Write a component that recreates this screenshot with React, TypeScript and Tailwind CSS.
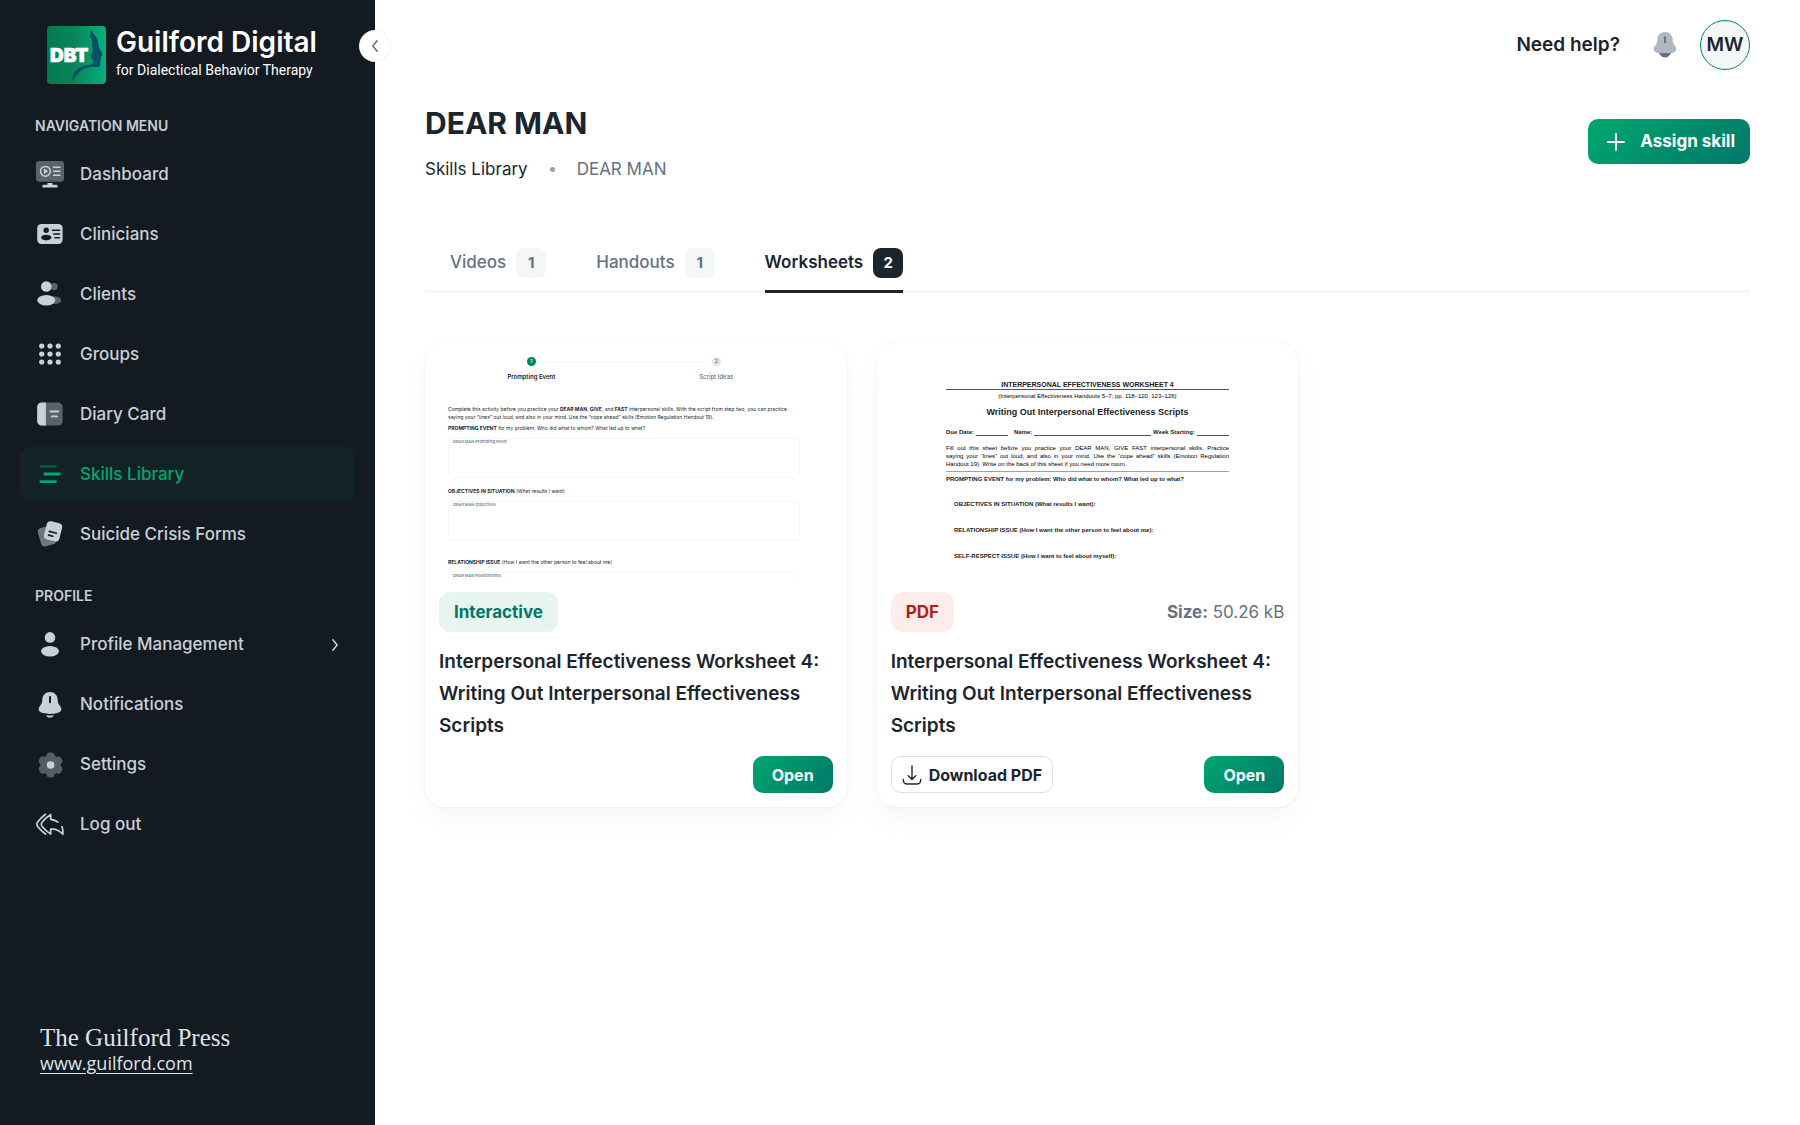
import React from "react";

/* ---------- icons ---------- */

type IconProps = { className?: string };

function Icon({ children, className = "size-7" }: { children: React.ReactNode; className?: string }) {
  return (
    <svg viewBox="0 0 28 28" className={className + " shrink-0"} fill="currentColor" aria-hidden="true">
      {children}
    </svg>
  );
}

const line = { stroke: "currentColor", strokeLinecap: "round" as const, fill: "none" };

const DashboardIcon = () => (
  <Icon>
    <rect width="28" height="20.7" rx="3.2" opacity="0.4" />
    <circle cx="9.4" cy="10.3" r="4.9" fill="none" stroke="currentColor" strokeWidth="1.5" />
    <path d="M8 7.6v5.4l4.2-2.7z" />
    <path d="M17 6.3h7.4M17 10.3h7.4M17 14.2h7.4" stroke="currentColor" strokeWidth="1.5" />
    <path d="M11.5 22h5v1.8h4.2c.5 0 .8.3.8.8v1.9h-15v-1.9c0-.5.3-.8.8-.8h4.2z" />
  </Icon>
);

const CliniciansIcon = () => (
  <Icon>
    <rect x="1.2" y="3" width="25.4" height="20" rx="4.2" />
    <g fill="#141a21">
      <circle cx="10.2" cy="9.2" r="2.7" />
      <ellipse cx="10.2" cy="16.6" rx="5.2" ry="2.8" />
    </g>
    <path d="M16.4 9.2h7.2M17.8 13h5.8M19 16.8h4.6" stroke="#141a21" strokeWidth="1.5" strokeLinecap="round" />
  </Icon>
);

const ClientsIcon = () => (
  <Icon>
    <g opacity="0.4">
      <circle cx="18" cy="5.6" r="3.7" />
      <ellipse cx="18.6" cy="19.3" rx="6.6" ry="3.8" />
    </g>
    <circle cx="10.3" cy="5.5" r="5.3" />
    <ellipse cx="10.3" cy="19.2" rx="9" ry="5.3" />
  </Icon>
);

const GroupsIcon = () => (
  <Icon>
    {[5, 13, 21].map((y) => [5.7, 14, 22.3].map((x) => <circle key={x + "-" + y} cx={x} cy={y} r="2.6" />))}
  </Icon>
);

const DiaryIcon = () => (
  <Icon>
    <rect x="1.2" y="1.4" width="25.4" height="23.2" rx="4.6" opacity="0.4" />
    <path d="M9.9 1.4H5.8a4.6 4.6 0 0 0-4.6 4.6v14a4.6 4.6 0 0 0 4.6 4.6h4.1z" />
    <path d="M14.5 10.5h7.8M15.8 15.4h5.2" {...line} strokeWidth="1.9" />
  </Icon>
);

const SkillsIcon = () => (
  <Icon>
    <path d="M4.8 5.4h14.7" {...line} strokeWidth="2.8" opacity="0.4" />
    <path d="M8.7 13h14.7M4.8 20.7h14.7" {...line} strokeWidth="2.8" />
  </Icon>
);

const FormsIcon = () => (
  <Icon>
    <rect x="3.2" y="5.6" width="15.6" height="19" rx="4" opacity="0.5" transform="rotate(-16 11 15)" />
    <rect x="9.2" y="1" width="15.8" height="18.6" rx="4" transform="rotate(14 17 10.3)" />
    <path d="M13.3 10.4l7 1.9M12.6 14.1l4.2 1.1" stroke="#141a21" strokeWidth="1.7" strokeLinecap="round" />
  </Icon>
);

const ProfileIcon = () => (
  <Icon>
    <circle cx="14" cy="6.4" r="5.3" />
    <ellipse cx="14" cy="20.2" rx="9" ry="5.3" />
  </Icon>
);

const bellBody =
  "M14 1c-4.4 0-7.5 3.3-7.7 7.6-.1 2.2-.2 3.4-1.3 5-1.2 1.7-2.3 2.9-2.3 4.9C2.7 21.6 8 22.9 14 22.9s11.3-1.3 11.3-4.4c0-2-1.1-3.2-2.3-4.9-1.1-1.6-1.2-2.8-1.3-5C21.5 4.3 18.4 1 14 1z";

const BellIcon = () => (
  <Icon>
    <path d={bellBody} />
    <path d="M14 5.9v5.4" stroke="#141a21" strokeWidth="2" strokeLinecap="round" />
    <path d="M9.8 24.2c2.8.4 5.6.4 8.4 0-1 1.5-2.5 2.3-4.2 2.3s-3.2-.8-4.2-2.3z" />
  </Icon>
);

const HeaderBellIcon = ({ className }: IconProps) => (
  <Icon className={className}>
    <path d="M7.8 21c1.2 3.7 3.5 5.6 6.2 5.6s5-1.9 6.2-5.6z" fill="#637381" />
    <path d={bellBody} fill="#afb8c1" />
    <path d="M8.6 22.6h10.8" stroke="#637381" strokeWidth="1" />
    <path d="M14 5.9v5.4" stroke="#637381" strokeWidth="2" strokeLinecap="round" />
  </Icon>
);

const GearIcon = () => (
  <Icon>
    <g fill="#565d66">
      <circle cx="14.6" cy="14" r="10.2" />
      {[0, 60, 120, 180, 240, 300].map((a) => (
        <rect key={a} x="10.6" y="1.4" width="8" height="9" rx="3" transform={`rotate(${a} 14.6 14)`} />
      ))}
    </g>
    <circle cx="14.6" cy="14" r="3.8" />
  </Icon>
);

const LogoutIcon = () => (
  <Icon>
    <path
      d="M9.5 3.3C6.5 5.5 4 7.9 1.7 11.1c-1 1.4-1 3 0 4.4C4 18.6 6.5 21 9.5 23"
      {...line}
      strokeWidth="1.7"
    />
    <path
      d="M22 11.1c-2-1.5-4.3-2.4-7.3-2.8V3.5C11 5.9 8.3 8.3 5.8 11.5c-.8 1.1-.8 2.5 0 3.6 2.5 3.2 5.2 5.6 8.9 8v-5c5.1-.5 9 1.4 12.2 5.2.1-3 .1-5.2-.9-7.7"
      {...line}
      strokeWidth="1.7"
      strokeLinejoin="round"
    />
  </Icon>
);

/* ---------- sidebar ---------- */

const mainNav = [
  { label: "Dashboard", icon: DashboardIcon },
  { label: "Clinicians", icon: CliniciansIcon },
  { label: "Clients", icon: ClientsIcon },
  { label: "Groups", icon: GroupsIcon },
  { label: "Diary Card", icon: DiaryIcon },
  { label: "Skills Library", icon: SkillsIcon, active: true },
  { label: "Suicide Crisis Forms", icon: FormsIcon },
];

const profileNav = [
  { label: "Profile Management", icon: ProfileIcon, expandable: true },
  { label: "Notifications", icon: BellIcon },
  { label: "Settings", icon: GearIcon },
  { label: "Log out", icon: LogoutIcon },
];

type NavEntry = { label: string; icon: () => React.ReactElement; active?: boolean; expandable?: boolean };

function NavSection({ title, items }: { title: string; items: NavEntry[] }) {
  return (
    <section>
      <h2 className="px-[15px] text-sm leading-5 font-semibold text-[#c4cdd5]">{title}</h2>
      <ul className="mt-[11px] flex flex-col gap-1">
        {items.map(({ label, icon: ItemIcon, active, expandable }) => (
          <li key={label}>
            <a
              href="#"
              aria-current={active ? "page" : undefined}
              className={
                active
                  ? "flex h-14 items-center gap-4 rounded-xl bg-[#00a76f]/6 px-4 text-[17px] font-medium text-[#00a76f]"
                  : "flex h-14 items-center gap-4 rounded-xl px-4 text-[17px] font-medium text-[#c9d0d8]"
              }
            >
              <ItemIcon />
              <span className="flex-1">{label}</span>
              {expandable && (
                <svg viewBox="0 0 8 14" className="h-3 w-2" fill="none" stroke="currentColor" strokeWidth="1.8" strokeLinecap="round" strokeLinejoin="round" aria-hidden="true">
                  <path d="M1.5 1l5 6-5 6" />
                </svg>
              )}
            </a>
          </li>
        ))}
      </ul>
    </section>
  );
}

function Logo() {
  return (
    <div className="flex items-start gap-2.5 px-[27px]">
      <svg viewBox="0 0 59 58" className="h-[58px] w-[59px] shrink-0" role="img" aria-label="DBT">
        <defs>
          <linearGradient id="logo-bg" x1="0" y1="0" x2="1" y2="0">
            <stop offset="0" stopColor="#057a52" />
            <stop offset="0.45" stopColor="#07845a" />
            <stop offset="1" stopColor="#05b07b" />
          </linearGradient>
        </defs>
        <rect width="59" height="58" rx="4" fill="url(#logo-bg)" />
        <path
          d="M44.3 3.5C45.5 8 49.5 10 50.8 14.5c.8 2.5.3 4.2 1 6.5.9 3 3 5.2 3.6 7.7-.1 1-1.6.8-1.7 1.8l.5 2.4-1 1.2.4 1.5c-1.2 1.5.4 3-.6 4.2-2.5 2.2-7.5.6-12.2 1.8-7 1.8-11.5 7.2-15.4 14.4 0-4.5.6-8 3.4-11.5 4.5-5 10.2-5 14.2-5.8 3-.9 4-3.2 2.6-5.2-1.6-1.5-2.2-2.6-1.8-4 .9-2.4 2-3.5 1.9-6.2-.1-2.2-1-3.5-.4-6 .4-2.5-1.8-4.5-2.1-7-.3-2.5.3-4.5 1.1-6.8z"
          fill="#0a4f63"
        />
        <text x="3" y="36" fontFamily="Inter, sans-serif" fontWeight="900" fontSize="19" fill="#fff" stroke="#fff" strokeWidth="0.7">
          DBT
        </text>
      </svg>
      <div className="whitespace-nowrap text-white">
        <p className="text-[28px] leading-8 font-semibold">Guilford Digital</p>
        <p className="mt-0.5 font-['Roboto',sans-serif] text-sm leading-5">for Dialectical Behavior Therapy</p>
      </div>
    </div>
  );
}

function Sidebar() {
  return (
    <aside className="relative flex w-[375px] shrink-0 flex-col bg-[#141a21] px-5 pt-[26px] pb-[49px]">
      <Logo />
      <button
        type="button"
        aria-label="Collapse menu"
        className="absolute top-[30px] -right-4 flex size-8 items-center justify-center rounded-full border border-[#919eab]/12 bg-white text-[#637381]"
      >
        <svg viewBox="0 0 8 14" className="h-3 w-2" fill="none" stroke="currentColor" strokeWidth="1.8" strokeLinecap="round" strokeLinejoin="round" aria-hidden="true">
          <path d="M6.5 1l-5 6 5 6" />
        </svg>
      </button>
      <nav aria-label="Main" className="mt-8 flex flex-col gap-[23px]">
        <NavSection title="NAVIGATION MENU" items={mainNav} />
        <NavSection title="PROFILE" items={profileNav} />
      </nav>
      <footer className="mt-auto px-5 pt-8 text-[#dfe3e8]">
        <p className="font-['Liberation_Serif',serif] text-[25px] leading-[26px]">The Guilford Press</p>
        <a href="#" className="font-['Open_Sans',sans-serif] text-lg leading-6 underline underline-offset-3">
          www.guilford.com
        </a>
      </footer>
    </aside>
  );
}

/* ---------- worksheet previews ---------- */

function PreviewField({ label }: { label: string }) {
  return (
    <div className="mt-1.5 h-10 rounded-[3px] border border-[#f4f6f8] px-1 text-[4px] leading-[6px] font-medium text-[#637381]">
      {label}
    </div>
  );
}

function InteractivePreview() {
  return (
    <div className="h-[234px] overflow-hidden pt-3.5 text-[5px] leading-2 text-[#1c252e]">
      <div className="relative mr-[38px] ml-3.5 grid grid-cols-2 text-center text-[6px] font-medium">
        <div className="absolute top-1 right-1/4 left-1/4 mx-2 h-px bg-[#f4f6f8]" />
        <div>
          <span className="mx-auto block size-[9px] rounded-full bg-[#00875a] text-[5px] leading-[9px] text-white">1</span>
          <p className="mt-[7px] font-semibold">Prompting Event</p>
        </div>
        <div className="text-[#637381]">
          <span className="mx-auto block size-[9px] rounded-full bg-[#dfe3e8] text-[5px] leading-[9px]">2</span>
          <p className="mt-[7px]">Script Ideas</p>
        </div>
      </div>
      <div className="mt-6 mr-[47px] ml-[23px]">
        <p>
          Complete this activity before you practice your <b>DEAR MAN</b>, <b>GIVE</b>, and <b>FAST</b> interpersonal
          skills. With the script from step two, you can practice
          <br />
          saying your “lines” out loud, and also in your mind. Use the “cope ahead” skills (Emotion Regulation Handout 19).
        </p>
        <p className="mt-[3px]">
          <b>PROMPTING EVENT</b> for my problem: Who did what to whom? What led up to what?
        </p>
        <PreviewField label="DEAR MAN Prompting Event" />
        <p className="mt-[9px]">
          <b>OBJECTIVES IN SITUATION</b> (What results I want)
        </p>
        <PreviewField label="DEAR MAN Objectives" />
        <p className="mt-[17px]">
          <b>RELATIONSHIP ISSUE</b> (How I want the other person to feel about me)
        </p>
        <PreviewField label="DEAR MAN Relationships" />
      </div>
    </div>
  );
}

function PdfPreview() {
  return (
    <div className="h-[234px] overflow-hidden pt-[38px] font-['Liberation_Sans',sans-serif] text-[6px] leading-2 font-bold text-[#1c1c22]">
      <div className="mx-auto w-[283px]">
        <p className="border-b border-[#55555a] text-center text-[7px]">INTERPERSONAL EFFECTIVENESS WORKSHEET 4</p>
        <p className="mt-px text-center leading-[10px] font-normal text-black">
          (Interpersonal Effectiveness Handouts 5–7; pp. 118–120, 123–126)
        </p>
        <p className="mt-[5px] text-center text-[9px] leading-3">Writing Out Interpersonal Effectiveness Scripts</p>
        <div className="mt-2.5 flex gap-0.5">
          <span>Due Date:</span>
          <span className="mr-1 w-8 border-b border-[#55555a]" />
          <span>Name:</span>
          <span className="flex-1 border-b border-[#55555a]" />
          <span>Week Starting:</span>
          <span className="w-8 border-b border-[#55555a]" />
        </div>
        <p className="mt-2 font-normal whitespace-nowrap text-black">
          <span className="block [text-align-last:justify]">
            Fill out this sheet before you practice your DEAR MAN, GIVE FAST interpersonal skills. Practice
          </span>
          <span className="block [text-align-last:justify]">
            saying your “lines” out loud, and also in your mind. Use the “cope ahead” skills (Emotion Regulation
          </span>
          <span className="block">Handout 19). Write on the back of this sheet if you need more room.</span>
        </p>
        <p className="mt-[3px] border-t border-[#a0a0a4] pt-[3px]">
          PROMPTING EVENT for my problem: Who did what to whom? What led up to what?
        </p>
        <div className="mt-[17px] flex flex-col gap-[18px] pl-2">
          <p>OBJECTIVES IN SITUATION (What results I want):</p>
          <p>RELATIONSHIP ISSUE (How I want the other person to feel about me):</p>
          <p>SELF-RESPECT ISSUE (How I want to feel about myself):</p>
        </div>
      </div>
    </div>
  );
}

/* ---------- cards ---------- */

function WorksheetCard({
  preview,
  badge,
  size,
  downloadable,
}: {
  preview: React.ReactNode;
  badge: React.ReactNode;
  size?: string;
  downloadable?: boolean;
}) {
  return (
    <article className="rounded-[20px] bg-white shadow-[0_0_2px_rgba(145,158,171,0.2),0_12px_24px_-4px_rgba(145,158,171,0.12)]">
      {preview}
      <div className="px-3.5 pt-[15px] pb-3.5">
        <div className="flex h-10 items-center justify-between text-[17px] leading-10">
          {badge}
          {size && (
            <p className="text-[#637381]">
              <b>Size:</b> {size}
            </p>
          )}
        </div>
        <h3 className="mt-3.5 text-[19px] leading-8 font-semibold text-[#1c252e]">
          Interpersonal Effectiveness Worksheet 4: Writing Out Interpersonal Effectiveness Scripts
        </h3>
        <div className="mt-3.5 flex h-[37px] items-stretch">
          {downloadable && (
            <button type="button" className="flex items-center gap-[7px] rounded-[10px] border border-[#dce0e4] px-2.5 text-base font-bold whitespace-nowrap text-[#1c252e]">
              <svg viewBox="0 0 20 20" className="size-5" fill="none" stroke="currentColor" strokeWidth="1.4" strokeLinecap="round" strokeLinejoin="round" aria-hidden="true">
                <path d="M10 1v13.5M6.3 10.8L10 14.6l3.7-3.8" />
                <path d="M1.3 14.4c0 3.3.7 4.6 4.2 4.6h9c3.5 0 4.2-1.3 4.2-4.6" />
              </svg>
              Download PDF
            </button>
          )}
          <button type="button" className="ml-auto w-20 rounded-[10px] bg-linear-135 from-[#00a76f] to-[#007867] text-base font-bold text-white">
            Open
          </button>
        </div>
      </div>
    </article>
  );
}

const tabs = [
  { label: "Videos", count: 1 },
  { label: "Handouts", count: 1 },
  { label: "Worksheets", count: 2, active: true },
];

export default function App() {
  return (
    <div className="flex min-h-screen bg-white font-['Inter',sans-serif] text-[#1c252e]">
      <Sidebar />
      <main className="min-w-0 flex-1 px-[50px]">
        <header className="flex items-center justify-end pt-5">
          <a href="#" className="text-[19px] font-semibold">
            Need help?
          </a>
          <button type="button" aria-label="Notifications" className="mr-[21px] ml-[31px]">
            <HeaderBellIcon className="size-7" />
          </button>
          <button type="button" aria-label="Account" className="size-[50px] rounded-full border border-[#00875a] bg-[#f4f6f8] text-[19px] font-semibold">
            MW
          </button>
        </header>

        <div className="mt-[33px] flex items-start justify-between">
          <div>
            <h1 className="text-[30px] leading-10 font-bold">DEAR MAN</h1>
            <nav aria-label="Breadcrumb" className="mt-3.5 flex items-center text-[17px] leading-6">
              <a href="#">Skills Library</a>
              <span className="mx-[22px] size-[5px] rounded-full bg-[#919eab]" />
              <span className="text-[#637381]">DEAR MAN</span>
            </nav>
          </div>
          <button type="button" className="mt-4 flex h-[45px] items-center gap-[15px] rounded-[10px] bg-linear-135 from-[#00a76f] to-[#007867] pr-[15px] pl-[19px] text-[17px] font-bold text-white">
            <svg viewBox="0 0 18 18" className="size-[18px]" stroke="currentColor" strokeWidth="1.9" strokeLinecap="round" aria-hidden="true">
              <path d="M9 1v16M1 9h16" />
            </svg>
            Assign skill
          </button>
        </div>

        <div role="tablist" className="mt-[61px] flex gap-[50px] border-b-[3px] border-[#f4f6f8] pl-[25px]">
          {tabs.map(({ label, count, active }) => (
            <button
              key={label}
              type="button"
              role="tab"
              aria-selected={!!active}
              className={
                active
                  ? "-mb-[3px] flex h-[51px] items-center gap-2.5 border-b-[3px] border-[#1c252e] pt-1 pb-2.5 text-[17px] font-semibold"
                  : "-mb-[3px] flex h-[51px] items-center gap-2.5 border-b-[3px] border-transparent pt-1 pb-2.5 text-[17px] font-medium text-[#637381]"
              }
            >
              {label}
              <span
                className={
                  active
                    ? "flex size-[30px] items-center justify-center rounded-lg bg-[#1c252e] text-[15px] font-bold text-white"
                    : "flex size-[30px] items-center justify-center rounded-lg bg-[#f4f6f8] text-[15px] font-bold text-[#637381]"
                }
              >
                {count}
              </span>
            </button>
          ))}
        </div>

        <div className="mt-[50px] grid grid-cols-3 gap-[30px]">
          <WorksheetCard
            preview={<InteractivePreview />}
            badge={
              <span className="rounded-xl bg-[#e8f4f0] px-[15px] font-bold text-[#007867]">Interactive</span>
            }
          />
          <WorksheetCard
            preview={<PdfPreview />}
            badge={<span className="rounded-xl bg-[#fdedea] px-[15px] font-bold text-[#b71d18]">PDF</span>}
            size="50.26 kB"
            downloadable
          />
        </div>
      </main>
    </div>
  );
}
